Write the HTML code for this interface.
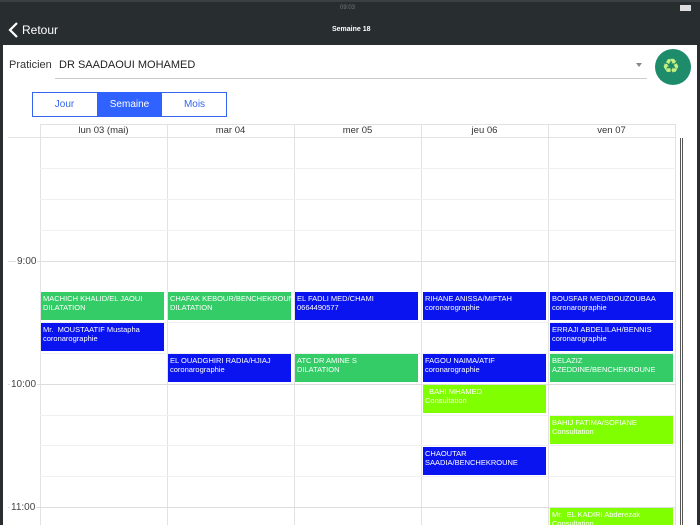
<!DOCTYPE html>
<html style="width:700px;height:525px;overflow:hidden"><head><meta charset="utf-8"><style>
*{margin:0;padding:0;box-sizing:border-box}
body{width:700px;height:525px;overflow:hidden;background:#fff;font-family:"Liberation Sans",sans-serif;position:relative}
.a{position:absolute}
.hdr{left:0;top:0;width:700px;height:45px;background:#282d30}
.ev{position:absolute;color:#fff;font-size:7.5px;line-height:8.5px;padding:3px 2px;overflow:hidden;white-space:nowrap}
.b{background:#0a14f0}.g{background:#33cc66}.l{background:#80ff00}
.hl{position:absolute;left:40px;width:636px;height:1px;background:#f0f0f0}
.vl{position:absolute;top:124px;height:401px;width:1px;background:#e2e2e2}
.dh{position:absolute;top:124px;height:13px;font-size:9.5px;color:#333;text-align:center;line-height:13px}
.tm{position:absolute;left:10px;font-size:10px;color:#444}
</style></head><body>
<div class="a hdr"></div>
<div class="a" style="left:0;top:0;width:700px;height:2px;background:#3a3f42"></div>
<div class="a" style="left:340px;top:5px;font-size:6px;color:#777">09:03</div>
<div class="a" style="left:680px;top:5px;width:11px;height:6px;border:1px solid #ddd;background:#ddd"></div>
<svg class="a" style="left:8px;top:22px" width="12" height="16"><path d="M9 1 L2 8 L9 15" stroke="#fff" stroke-width="2.2" fill="none"/></svg>
<div class="a" style="left:22px;top:23px;color:#fff;font-size:12px">Retour</div>
<div class="a" style="left:332px;top:26px;color:#fff;font-size:7px;font-weight:bold">Semaine 18</div>
<div class="a" style="left:0;top:45px;width:3px;height:480px;background:#2a2e30"></div>
<div class="a" style="left:697px;top:45px;width:3px;height:480px;background:#2a2e30"></div>
<div class="a" style="left:9px;top:59px;font-size:11px;color:#333">Praticien</div>
<div class="a" style="left:59px;top:59px;font-size:11px;color:#222">DR SAADAOUI MOHAMED</div>
<div class="a" style="left:55px;top:78px;width:592px;height:1px;background:#ccc"></div>
<div class="a" style="left:636px;top:63px;width:0;height:0;border-left:3.5px solid transparent;border-right:3.5px solid transparent;border-top:4px solid #888"></div>
<div class="a" style="left:655px;top:49px;width:36px;height:36px;border-radius:50%;background:#1e8c6a"></div>
<div class="a" style="left:662px;top:55px;font-size:20px;color:#c8f080;line-height:24px">♻</div>
<div class="a" style="left:32px;top:92px;width:195px;height:25px;border:1px solid #3466f0"></div>
<div class="a" style="left:32px;top:93px;width:65px;height:23px;color:#3466f0;font-size:10px;text-align:center;line-height:23px">Jour</div>
<div class="a" style="left:97px;top:92px;width:65px;height:25px;background:#2f62ff;color:#fff;font-size:10px;text-align:center;line-height:25px">Semaine</div>
<div class="a" style="left:162px;top:93px;width:65px;height:23px;color:#3466f0;font-size:10px;text-align:center;line-height:23px">Mois</div>
<div class="a" style="left:40px;top:124px;width:636px;height:1px;background:#e2e2e2"></div>
<div class="a" style="left:8px;top:137px;width:668px;height:1px;background:#e2e2e2"></div>
<div class="dh" style="left:40px;width:127px">lun 03 (mai)</div>
<div class="dh" style="left:167px;width:127px">mar 04</div>
<div class="dh" style="left:294px;width:127px">mer 05</div>
<div class="dh" style="left:421px;width:127px">jeu 06</div>
<div class="dh" style="left:548px;width:127px">ven 07</div>
<div class="vl" style="left:40px"></div><div class="vl" style="left:167px"></div><div class="vl" style="left:294px"></div><div class="vl" style="left:421px"></div><div class="vl" style="left:548px"></div><div class="vl" style="left:675px"></div>
<div class="hl" style="top:168px"></div><div class="hl" style="top:199px"></div><div class="hl" style="top:230px"></div>
<div class="hl" style="top:261px;left:8px;width:668px;background:#ddd"></div>
<div class="hl" style="top:292px"></div><div class="hl" style="top:322px"></div><div class="hl" style="top:353px"></div>
<div class="hl" style="top:384px;left:8px;width:668px;background:#ddd"></div>
<div class="hl" style="top:415px"></div><div class="hl" style="top:445px"></div><div class="hl" style="top:476px"></div>
<div class="hl" style="top:507px;left:8px;width:668px;background:#ddd"></div>
<div class="tm" style="top:256px;background:#fff;padding:0 1px;left:16px">9:00</div>
<div class="tm" style="top:379px;background:#fff;padding:0 1px">10:00</div>
<div class="tm" style="top:502px;background:#fff;padding:0 1px">11:00</div>
<div class="a" style="left:680px;top:138px;width:3px;height:387px;border-left:1px solid #555;border-right:1px solid #555"></div>
<div class="ev g" style="left:41px;top:292px;width:123px;height:28px">MACHICH KHALID/EL JAOUI<br>DILATATION</div>
<div class="ev b" style="left:41px;top:323px;width:123px;height:28px">Mr.&nbsp; MOUSTAATIF Mustapha<br>coronarographie</div>
<div class="ev g" style="left:168px;top:292px;width:123px;height:28px">CHAFAK KEBOUR/BENCHEKROUNE<br>DILATATION</div>
<div class="ev b" style="left:168px;top:354px;width:123px;height:28px">EL OUADGHIRI RADIA/HJIAJ<br>coronarographie</div>
<div class="ev b" style="left:295px;top:292px;width:123px;height:28px">EL FADLI MED/CHAMI<br>0664490577</div>
<div class="ev g" style="left:295px;top:354px;width:123px;height:28px">ATC DR AMINE S<br>DILATATION</div>
<div class="ev b" style="left:423px;top:292px;width:123px;height:28px">RIHANE ANISSA/MIFTAH<br>coronarographie</div>
<div class="ev b" style="left:423px;top:354px;width:123px;height:28px">FAGOU NAIMA/ATIF<br>coronarographie</div>
<div class="ev l" style="left:423px;top:385px;width:123px;height:28px">&nbsp; BAHI MHAMED<br>Consultation</div>
<div class="ev b" style="left:423px;top:447px;width:123px;height:28px">CHAOUTAR<br>SAADIA/BENCHEKROUNE</div>
<div class="ev b" style="left:550px;top:292px;width:123px;height:28px">BOUSFAR MED/BOUZOUBAA<br>coronarographie</div>
<div class="ev b" style="left:550px;top:323px;width:123px;height:28px">ERRAJI ABDELILAH/BENNIS<br>coronarographie</div>
<div class="ev g" style="left:550px;top:354px;width:123px;height:28px">BELAZIZ<br>AZEDDINE/BENCHEKROUNE</div>
<div class="ev l" style="left:550px;top:416px;width:123px;height:28px">BAHIJ FATIMA/SOFIANE<br>Consultation</div>
<div class="ev l" style="left:550px;top:508px;width:123px;height:17px">Mr.&nbsp; EL KADIRI Abderezak<br>Consultation</div>
</body></html>
